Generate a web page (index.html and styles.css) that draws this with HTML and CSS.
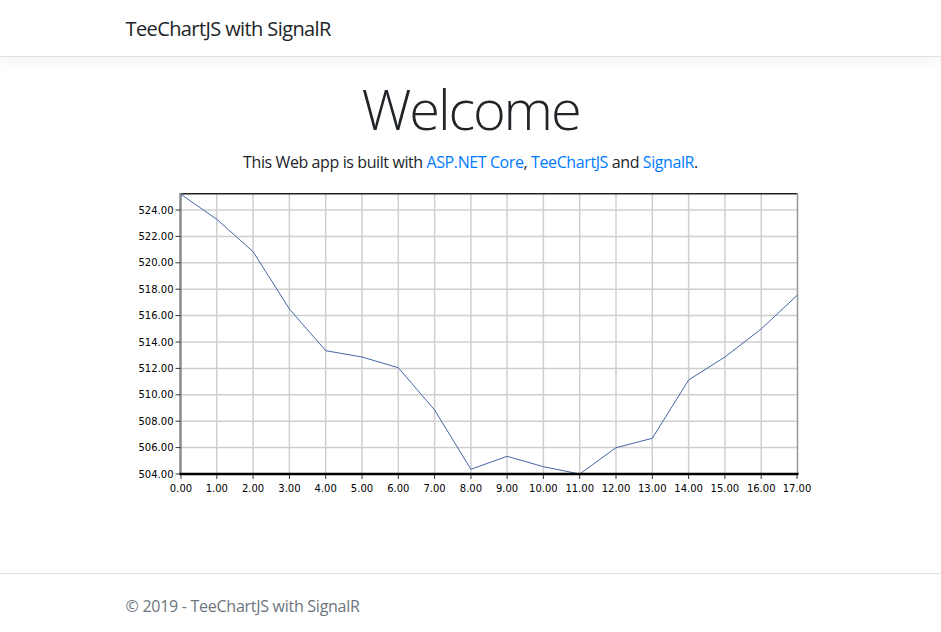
FILE: index.html
```html
<!DOCTYPE html>
<html lang="en">
<head>
<meta charset="utf-8">
<title>TeeChartJS with SignalR</title>
<link rel="stylesheet" href="styles.css">
</head>
<body>
<header class="site-header">
  <nav class="navbar">
    <div class="container">
      <a class="brand" href="#">TeeChartJS with SignalR</a>
    </div>
  </nav>
</header>
<main class="container main">
  <div class="hero">
    <h1 class="display">Welcome</h1>
    <p class="intro">This Web app is built with <a href="#">ASP.NET Core</a>, <a href="#">TeeChartJS</a> and <a href="#">SignalR</a>.</p>
  </div>
  <div class="chart-wrap">
    <svg class="chart" width="690" height="312" viewBox="125.5 188 690 312" xmlns="http://www.w3.org/2000/svg">
      <g class="grid" stroke="#cfcfcf" stroke-width="1.5" fill="none">
        <line x1="180" y1="447.6" x2="797" y2="447.6"/>
        <line x1="180" y1="421.2" x2="797" y2="421.2"/>
        <line x1="180" y1="394.8" x2="797" y2="394.8"/>
        <line x1="180" y1="368.4" x2="797" y2="368.4"/>
        <line x1="180" y1="342" x2="797" y2="342"/>
        <line x1="180" y1="315.6" x2="797" y2="315.6"/>
        <line x1="180" y1="289.2" x2="797" y2="289.2"/>
        <line x1="180" y1="262.8" x2="797" y2="262.8"/>
        <line x1="180" y1="236.4" x2="797" y2="236.4"/>
        <line x1="180" y1="210" x2="797" y2="210"/>
        <line x1="216.3" y1="194" x2="216.3" y2="474"/>
        <line x1="252.6" y1="194" x2="252.6" y2="474"/>
        <line x1="288.9" y1="194" x2="288.9" y2="474"/>
        <line x1="325.2" y1="194" x2="325.2" y2="474"/>
        <line x1="361.5" y1="194" x2="361.5" y2="474"/>
        <line x1="397.8" y1="194" x2="397.8" y2="474"/>
        <line x1="434.1" y1="194" x2="434.1" y2="474"/>
        <line x1="470.4" y1="194" x2="470.4" y2="474"/>
        <line x1="506.6" y1="194" x2="506.6" y2="474"/>
        <line x1="542.9" y1="194" x2="542.9" y2="474"/>
        <line x1="579.2" y1="194" x2="579.2" y2="474"/>
        <line x1="615.5" y1="194" x2="615.5" y2="474"/>
        <line x1="651.8" y1="194" x2="651.8" y2="474"/>
        <line x1="688.1" y1="194" x2="688.1" y2="474"/>
        <line x1="724.4" y1="194" x2="724.4" y2="474"/>
        <line x1="760.7" y1="194" x2="760.7" y2="474"/>
      </g>
      <line x1="179.5" y1="193.7" x2="797.5" y2="193.7" stroke="#222" stroke-width="1.5"/>
      <line x1="797" y1="193" x2="797" y2="474" stroke="#999" stroke-width="1.5"/>
      <line x1="180" y1="193" x2="180" y2="475" stroke="#8a8a8a" stroke-width="2.5"/>
      <g stroke="#333" stroke-width="1">
        <line x1="175" y1="474" x2="180" y2="474"/>
        <line x1="175" y1="447.6" x2="180" y2="447.6"/>
        <line x1="175" y1="421.2" x2="180" y2="421.2"/>
        <line x1="175" y1="394.8" x2="180" y2="394.8"/>
        <line x1="175" y1="368.4" x2="180" y2="368.4"/>
        <line x1="175" y1="342" x2="180" y2="342"/>
        <line x1="175" y1="315.6" x2="180" y2="315.6"/>
        <line x1="175" y1="289.2" x2="180" y2="289.2"/>
        <line x1="175" y1="262.8" x2="180" y2="262.8"/>
        <line x1="175" y1="236.4" x2="180" y2="236.4"/>
        <line x1="175" y1="210" x2="180" y2="210"/>
        <line x1="180.5" y1="474" x2="180.5" y2="479"/>
        <line x1="216.3" y1="474" x2="216.3" y2="479"/>
        <line x1="252.6" y1="474" x2="252.6" y2="479"/>
        <line x1="288.9" y1="474" x2="288.9" y2="479"/>
        <line x1="325.2" y1="474" x2="325.2" y2="479"/>
        <line x1="361.5" y1="474" x2="361.5" y2="479"/>
        <line x1="397.8" y1="474" x2="397.8" y2="479"/>
        <line x1="434.1" y1="474" x2="434.1" y2="479"/>
        <line x1="470.4" y1="474" x2="470.4" y2="479"/>
        <line x1="506.6" y1="474" x2="506.6" y2="479"/>
        <line x1="542.9" y1="474" x2="542.9" y2="479"/>
        <line x1="579.2" y1="474" x2="579.2" y2="479"/>
        <line x1="615.5" y1="474" x2="615.5" y2="479"/>
        <line x1="651.8" y1="474" x2="651.8" y2="479"/>
        <line x1="688.1" y1="474" x2="688.1" y2="479"/>
        <line x1="724.4" y1="474" x2="724.4" y2="479"/>
        <line x1="760.7" y1="474" x2="760.7" y2="479"/>
        <line x1="796.5" y1="474" x2="796.5" y2="479"/>
      </g>
      <polyline fill="none" stroke="#4466a3" stroke-width="1" points="180,194 216.3,219.3 252.6,251.7 288.9,309 325.2,350.7 361.5,357 397.8,367.7 434.1,410 470.4,469.3 506.6,456.3 542.9,466.7 579.2,474 615.5,447.7 651.8,438.3 688.1,380 724.4,357 760.7,329 797,295"/>
      <line x1="179" y1="474" x2="798" y2="474" stroke="#000" stroke-width="2.5"/>
      <g class="ylabels">
        <text x="173" y="477.5">504.00</text>
        <text x="173" y="451.1">506.00</text>
        <text x="173" y="424.7">508.00</text>
        <text x="173" y="398.3">510.00</text>
        <text x="173" y="371.9">512.00</text>
        <text x="173" y="345.5">514.00</text>
        <text x="173" y="319.1">516.00</text>
        <text x="173" y="292.7">518.00</text>
        <text x="173" y="266.3">520.00</text>
        <text x="173" y="239.9">522.00</text>
        <text x="173" y="213.5">524.00</text>
      </g>
      <g class="xlabels">
        <text x="180.5" y="492">0.00</text>
        <text x="216.3" y="492">1.00</text>
        <text x="252.6" y="492">2.00</text>
        <text x="288.9" y="492">3.00</text>
        <text x="325.2" y="492">4.00</text>
        <text x="361.5" y="492">5.00</text>
        <text x="397.8" y="492">6.00</text>
        <text x="434.1" y="492">7.00</text>
        <text x="470.4" y="492">8.00</text>
        <text x="506.6" y="492">9.00</text>
        <text x="542.9" y="492">10.00</text>
        <text x="579.2" y="492">11.00</text>
        <text x="615.5" y="492">12.00</text>
        <text x="651.8" y="492">13.00</text>
        <text x="688.1" y="492">14.00</text>
        <text x="724.4" y="492">15.00</text>
        <text x="760.7" y="492">16.00</text>
        <text x="796.5" y="492">17.00</text>
      </g>
    </svg>
  </div>
</main>
<footer class="site-footer">
  <div class="container">&copy; 2019 - TeeChartJS with SignalR</div>
</footer>
</body>
</html>
```

FILE: styles.css
```css
html, body {
  margin: 0;
  padding: 0;
}
body {
  font-family: "Open Sans", "Noto Sans", sans-serif;
  font-size: 16px;
  line-height: 1.5;
  letter-spacing: -0.025em;
  color: #212529;
  background: #fff;
  min-height: 100vh;
  display: flex;
  flex-direction: column;
}
.container {
  width: 720px;
  margin: 0 auto;
  padding: 0 15px;
  box-sizing: border-box;
}
.site-header {
  border-bottom: 1px solid #dee2e6;
  box-shadow: 0 4px 12px rgba(0, 0, 0, 0.05);
  margin-bottom: 16px;
}
.navbar {
  padding: 8px 0;
}
.brand {
  display: inline-block;
  padding: 6px 0 4px;
  font-size: 20px;
  line-height: 30px;
  letter-spacing: -0.03em;
  color: #212529;
  text-decoration: none;
  white-space: nowrap;
}
.main {
  padding-top: 2px;
  padding-bottom: 16px;
}
.hero {
  text-align: center;
}
.display {
  margin: 0 0 8px;
  font-size: 56px;
  font-weight: 300;
  line-height: 1.2;
  letter-spacing: -0.038em;
}
.intro {
  margin: 0 0 14px;
}
.intro a {
  color: #007bff;
  text-decoration: none;
}
.chart-wrap {
  display: block;
}
.chart {
  display: block;
  letter-spacing: 0;
}
.chart text {
  font-family: "DejaVu Sans", Verdana, sans-serif;
  font-size: 10px;
  fill: #000;
}
.ylabels text {
  text-anchor: end;
}
.xlabels text {
  text-anchor: middle;
}
.site-footer {
  margin-top: auto;
  border-top: 1px solid #dee2e6;
  padding-top: 6px;
  line-height: 52px;
  letter-spacing: -0.017em;
  color: #6c757d;
  white-space: nowrap;
}
```
